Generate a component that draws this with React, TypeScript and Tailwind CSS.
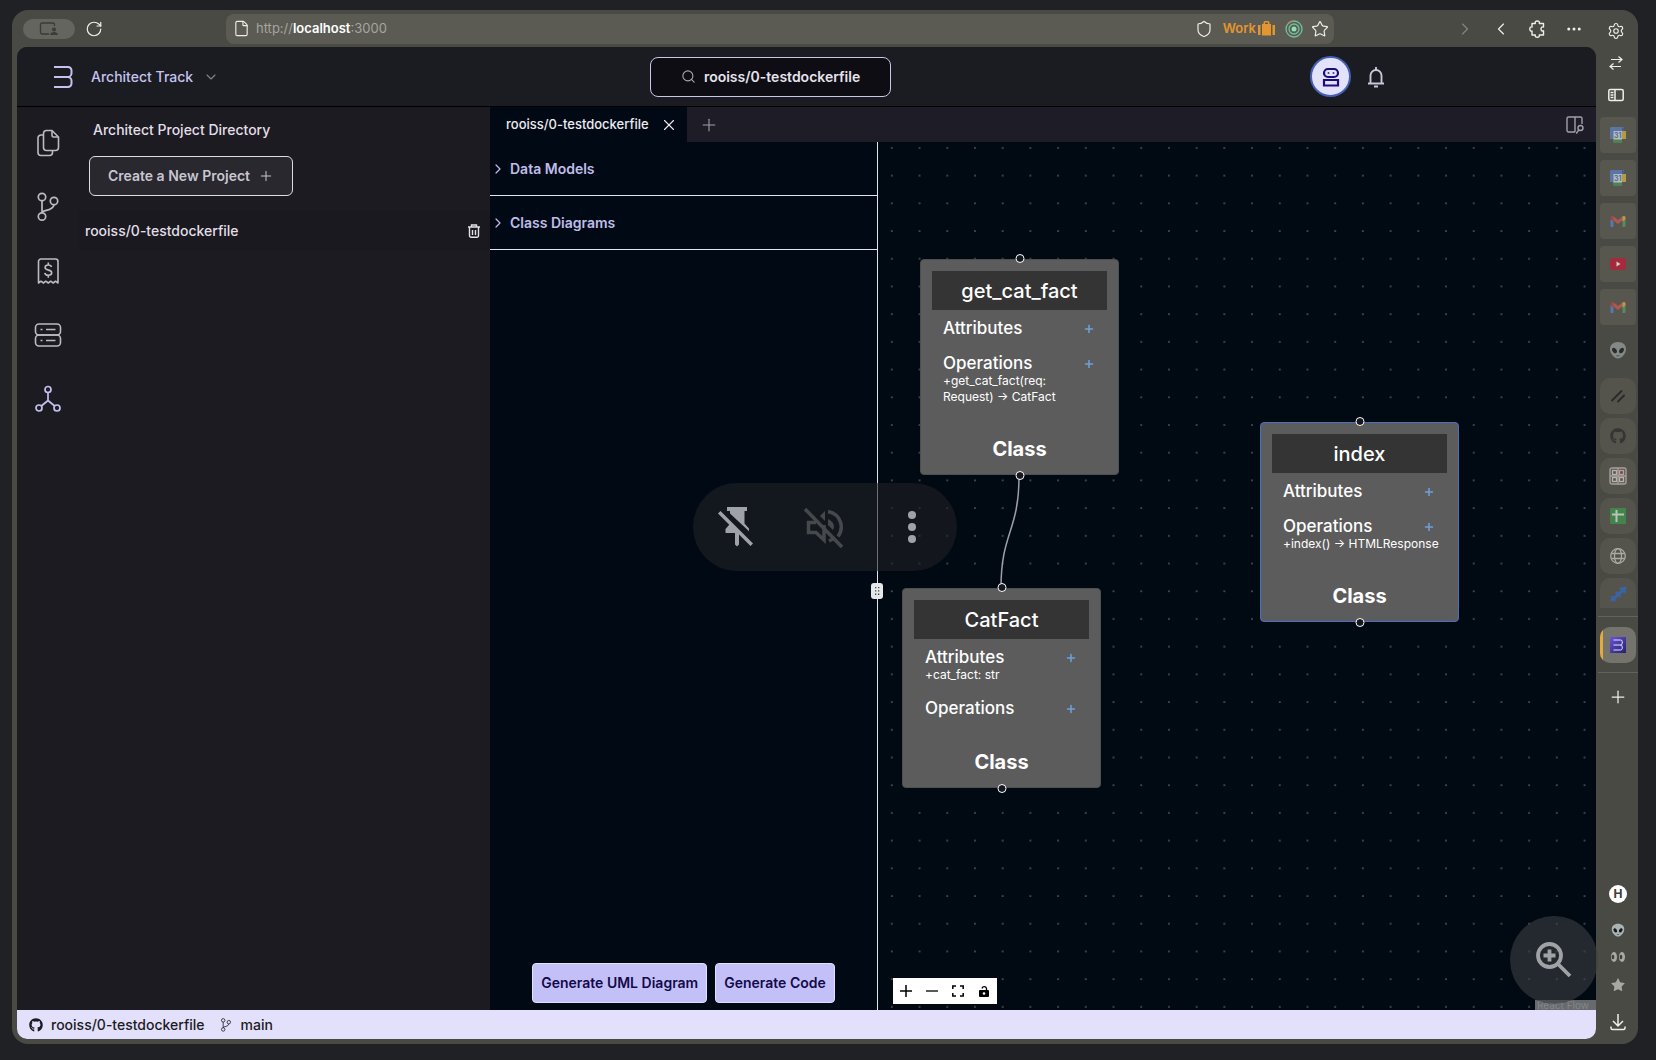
import { useState, type ReactNode } from 'react';
import {
  ChevronDown,
  ChevronLeft,
  ChevronRight,
  Ellipsis,
  File,
  Plus,
  RotateCw,
  Search,
  Settings,
  Shield,
  Star,
  X,
} from 'lucide-react';
import { FaGithub } from 'react-icons/fa';

const PROJECT = 'rooiss/0-testdockerfile';

type ClassNodeType = {
  name: string;
  place: string;
  attributes: string[];
  operations: string[];
  selected?: boolean;
};

const nodes: ClassNodeType[] = [
  {
    name: 'get_cat_fact',
    place: 'left-[42px] top-[117px] h-[216px]',
    attributes: [],
    operations: ['+get_cat_fact(req:\nRequest) → CatFact'],
  },
  {
    name: 'index',
    place: 'left-[382px] top-[280px] h-[200px]',
    attributes: [],
    operations: ['+index() → HTMLResponse'],
    selected: true,
  },
  {
    name: 'CatFact',
    place: 'left-[24px] top-[446px] h-[200px]',
    attributes: ['+cat_fact: str'],
    operations: [],
  },
];

function BranchIcon({ className }: { className: string }) {
  return (
    <svg viewBox="0 0 28 30" className={className} fill="none" stroke="currentColor" strokeWidth="1.7">
      <circle cx="8" cy="5" r="3.7" />
      <circle cx="20" cy="9" r="3.7" />
      <circle cx="8" cy="24.5" r="3.7" />
      <path d="M8 8.7v12M8 20.5c1-3 11-1 12-7.8" />
    </svg>
  );
}

function CopyIcon() {
  return (
    <svg viewBox="-1.5 -0.5 28 30" className="h-[30px] w-7" fill="none" stroke="currentColor" strokeWidth="1.6" strokeLinejoin="round">
      <path d="M16.500 2H11a3 3 0 0 0-3 3v14a3 3 0 0 0 3 3h9a3 3 0 0 0 3-3V8.500z" />
      <path d="M16.500 2.500V7A1.500 1.500 0 0 0 18 8.500h4.500" />
      <path d="M8 6.500H5.500a3 3 0 0 0-3 3V24a3 3 0 0 0 3 3H14a3 3 0 0 0 3-3v-2" />
    </svg>
  );
}

function ReceiptIcon() {
  return (
    <svg viewBox="0 0 28 30" className="h-[30px] w-7" fill="none" stroke="currentColor" strokeWidth="1.6" strokeLinejoin="round">
      <path d="M4.500 27V5.500a2.500 2.500 0 0 1 2.500-2.500h14.500a2.500 2.500 0 0 1 2.500 2.500V27l-2.500-1.800-2.300 1.800-2.500-1.800-2.400 1.800-2.500-1.800-2.400 1.800L7 25.200z" />
      <path d="M17.500 11c-.3-1.500-1.700-2-3.200-2-1.700 0-3.200.8-3.200 2.500 0 3.600 6.600 1.700 6.600 5.200 0 1.700-1.600 2.500-3.400 2.500-1.700 0-3.300-.8-3.500-2.400M14.300 6.500V9M14.300 19.200v2.600" />
    </svg>
  );
}

function ServerIcon() {
  return (
    <svg viewBox="0 0 28 30" className="h-[30px] w-7" fill="none" stroke="currentColor" strokeWidth="1.6">
      <rect x="1.5" y="4" width="25" height="11" rx="3.5" />
      <rect x="1.5" y="15" width="25" height="11" rx="3.5" />
      <path d="M12 9.500h9.500M12 20.500h9.500M6.500 9.500h2M6.500 20.500h2" />
    </svg>
  );
}

function DiagramIcon() {
  return (
    <svg viewBox="0 0 28 30" className="h-[30px] w-7 text-[#c3c0ee]" fill="none" stroke="currentColor" strokeWidth="1.7">
      <circle cx="14" cy="5.5" r="3" />
      <circle cx="5" cy="24" r="3" />
      <circle cx="23" cy="24" r="3" />
      <path d="M14 8.500v8M14 16.500L7.300 22M14 16.500l6.700 5.500" />
    </svg>
  );
}

function BLogo({ className }: { className: string }) {
  return (
    <svg viewBox="0 0 20 24" className={className} fill="none" stroke="currentColor" strokeWidth="2">
      <path d="M1 2h14a3.500 3.500 0 0 1 3.500 3.500v2.700a3.800 3.800 0 0 1-3.800 3.800H1M14.700 12a3.800 3.800 0 0 1 3.800 3.800v2.700A3.500 3.500 0 0 1 15 22H1" />
    </svg>
  );
}

function TrashIcon() {
  return (
    <svg viewBox="0 0 14 16" className="h-4 w-3.5" fill="none" stroke="currentColor" strokeWidth="1.4">
      <path d="M1 4h12M4.500 4V2h5v2M2.500 4.500v8.300a1.500 1.500 0 0 0 1.500 1.500h6a1.500 1.500 0 0 0 1.500-1.500V4.500M5.500 7v5M8.500 7v5" />
    </svg>
  );
}

function PuzzleIcon() {
  return (
    <svg viewBox="0 0 18 18" className="size-[18px]" fill="none" stroke="currentColor" strokeWidth="1.4" strokeLinejoin="round">
      <path d="M3 3.500h3.300C5.800 2 6.600 1 8.300 1s2.500 1 2 2.500h4.200V7c-1.600-.5-2.500.4-2.500 1.900s.9 2.400 2.500 1.900V15h-4.200c.4 1.500-.5 2.200-2 2.200s-2.400-.7-2-2.200H3v-4c-1.400.4-2.200-.6-2.200-2s.8-2.400 2.200-2z" />
    </svg>
  );
}

function AlienIcon({ className }: { className: string }) {
  return (
    <svg viewBox="0 0 18 18" className={className}>
      <path d="M9 1c5 0 8 3 8 7 0 4.500-4.500 9.500-8 9.500S1 12.500 1 8c0-4 3-7 8-7z" fill="#a9b3b4" />
      <ellipse cx="5.5" cy="9.5" rx="2" ry="3" transform="rotate(-35 5.5 9.5)" fill="#15191b" />
      <ellipse cx="12.5" cy="9.5" rx="2" ry="3" transform="rotate(35 12.5 9.5)" fill="#15191b" />
      <path d="M7.500 14.800h3" stroke="#4b5253" />
    </svg>
  );
}

function CalendarIcon() {
  return (
    <svg viewBox="0 0 16 16" className="size-4 opacity-75">
      <path d="M0 1.500A1.500 1.500 0 0 1 1.500 0H12v4H4v8H0z" fill="#5b80c4" />
      <path d="M12 0h1.500v4H16v8h-4V4z" fill="#d6b13a" />
      <path d="M12 0h.5A1.500 1.500 0 0 1 14 1.500V4h-2z" fill="#3d63ae" />
      <path d="M3 12h9v4H4.500A1.500 1.500 0 0 1 3 14.500z" fill="#4d9058" />
      <path d="M3.500 4H12v8.500H3.500z" fill="#d4dce4" />
      <text x="7.8" y="11" fontSize="7" textAnchor="middle" fill="#4a69a5" className="font-['Inter',sans-serif] font-semibold">
        31
      </text>
    </svg>
  );
}

function GmailIcon() {
  return (
    <svg viewBox="0 0 16 16" className="size-4 opacity-70">
      <path d="M.5 6.500h3V14h-2a1 1 0 0 1-1-1z" fill="#5b87d8" />
      <path d="M12.500 6.500h3V13a1 1 0 0 1-1 1h-2z" fill="#58a065" />
      <path d="M3 3l5 4 5-4v4l-5 4-5-4z" fill="#d25a50" />
      <path d="M12.500 3.500c1-1 3-.8 3 1v2l-3 2z" fill="#d8bb4c" />
      <path d="M3.500 3.500c-1-1-3-.8-3 1v2l3 2z" fill="#b6453f" />
    </svg>
  );
}

function YoutubeIcon() {
  return (
    <svg viewBox="0 0 16 16" className="size-4">
      <rect x="0" y="2" width="16" height="12" rx="3" fill="#a52b3c" />
      <path d="M6.500 5.500v5l4-2.500z" fill="#d6cfcf" />
    </svg>
  );
}

function SlashesIcon() {
  return (
    <svg viewBox="0 0 16 16" className="size-4" stroke="#292a2a" strokeWidth="1.9" strokeLinecap="round">
      <path d="M2 12.500l9.500-9.500M8 13.500l6-6" />
    </svg>
  );
}

function GridIcon() {
  return (
    <svg viewBox="0 0 18 18" className="size-[18px]" fill="none" strokeWidth="1.4">
      <rect x="1" y="1" width="16" height="16" rx="2" stroke="#a5a09d" />
      <rect x="3.5" y="3.5" width="4" height="4" stroke="#b7b2b0" />
      <rect x="10.5" y="3.5" width="4" height="4" stroke="#c29a9a" />
      <rect x="3.5" y="10.5" width="4" height="4" stroke="#b7b2b0" />
      <rect x="10.5" y="10.5" width="4" height="4" stroke="#b7b2b0" />
      <path d="M9 1v16M1 9h16" stroke="#a5a09d" />
    </svg>
  );
}

function SheetIcon() {
  return (
    <svg viewBox="0 0 16 16" className="size-4">
      <rect width="16" height="16" rx="1" fill="#43844d" />
      <path d="M2 6.500h12M6.500 2v12" stroke="#b9c4b6" strokeWidth="2" />
    </svg>
  );
}

function GlobeIcon() {
  return (
    <svg viewBox="0 0 18 18" className="size-[18px]" fill="none" stroke="#aaaaa5" strokeWidth="1.3">
      <circle cx="9" cy="9" r="7.3" />
      <ellipse cx="9" cy="9" rx="3.5" ry="7.3" />
      <path d="M2.500 6.500h13M2.500 11.500h13" />
    </svg>
  );
}

function ArrowsIcon() {
  return (
    <svg viewBox="0 0 18 18" className="size-[18px]" fill="#3a64aa">
      <path d="M10 2l7.500-1.500L16.500 8l-2.300-2-2.700 2.500-2-2L12 4z" />
      <path d="M5.500 6l6.500-.5-.5 6.500-2-1.700L7 12.500l-2-2L7.500 8z" />
      <path d="M1 10.500l6-.5-.5 6-2-1.500L3 16l-2-2 1.500-1.500z" />
    </svg>
  );
}

const tabIcons: { label: string; icon: ReactNode }[] = [
  { label: 'Calendar', icon: <CalendarIcon /> },
  { label: 'Second calendar', icon: <CalendarIcon /> },
  { label: 'Mail', icon: <GmailIcon /> },
  { label: 'Video', icon: <YoutubeIcon /> },
  { label: 'Second mail', icon: <GmailIcon /> },
];

const pinnedIcons: { label: string; icon: ReactNode }[] = [
  { label: 'Linear', icon: <SlashesIcon /> },
  { label: 'GitHub', icon: <FaGithub className="size-4 text-[#353634]" /> },
  { label: 'Board', icon: <GridIcon /> },
  { label: 'Sheets', icon: <SheetIcon /> },
  { label: 'Web page', icon: <GlobeIcon /> },
];

function BrowserBar() {
  return (
    <div className="flex h-[37px] items-center text-[#eeeeea]">
      <button aria-label="Profile" className="ml-[11px] flex h-5 w-[52px] items-center justify-center rounded-full bg-[#65655f]">
        <svg viewBox="0 0 20 14" className="h-3.5 w-5" fill="none" stroke="#3b3b37" strokeWidth="1.4">
          <path d="M10 12H3a1.500 1.500 0 0 1-1.500-1.500v-8A1.500 1.500 0 0 1 3 1h11a1.500 1.500 0 0 1 1.500 1.500V4" />
          <circle cx="15" cy="7.5" r="2" fill="#3b3b37" stroke="none" />
          <path d="M11 13c0-4 8-4 8 0z" fill="#3b3b37" stroke="none" />
        </svg>
      </button>
      <button aria-label="Reload" className="ml-2.5">
        <RotateCw className="size-[18px]" strokeWidth={1.6} />
      </button>
      <div className="ml-[123px] flex h-[30px] min-w-0 flex-1 items-center rounded-lg bg-[#5b5b54] pr-[5px] pl-[7px]">
        <File className="size-[17px] shrink-0" strokeWidth={1.6} />
        <p className="ml-1.5 flex-1 text-[13px] text-[#a5a5a0]">
          http://<span className="font-semibold text-white">localhost</span>:3000
        </p>
        <Shield className="size-[18px]" strokeWidth={1.6} />
        <span className="ml-2.5 text-[13px] font-semibold text-[#e3962f]">Work</span>
        <svg viewBox="0 0 17 15" className="ml-0.5 h-[15px] w-[17px]" fill="#e3962f">
          <path d="M0 4h2.500v10H0zM4 3h1.500V1.500A1.500 1.500 0 0 1 7 0h3a1.500 1.500 0 0 1 1.500 1.500V3H13v11.500H4zM7 1.500V3h3V1.500zM14.500 4H17v10h-2.500z" />
        </svg>
        <svg viewBox="0 0 18 18" className="ml-2.5 size-[18px]" fill="none" stroke="#6fc29a" strokeWidth="1.3">
          <circle cx="9" cy="9" r="8" />
          <circle cx="9" cy="9" r="5" />
          <circle cx="9" cy="9" r="2.5" fill="#8fe0b4" stroke="none" />
          <path d="M3.500 3.200a8 8 0 0 1 4-2" stroke="#c08a5a" />
        </svg>
        <button aria-label="Bookmark" className="ml-2">
          <Star className="size-[18px]" strokeWidth={1.6} />
        </button>
      </div>
      <button aria-label="Forward" className="ml-[121px] text-[#85857f]">
        <ChevronRight className="size-5" strokeWidth={1.4} />
      </button>
      <button aria-label="Back" className="ml-4">
        <ChevronLeft className="size-5" strokeWidth={1.4} />
      </button>
      <button aria-label="Extensions" className="ml-[18px]">
        <PuzzleIcon />
      </button>
      <button aria-label="More" className="mr-[13px] ml-[18px]">
        <Ellipsis className="size-[18px]" strokeWidth={2} />
      </button>
    </div>
  );
}

function BrowserSidebar() {
  return (
    <aside className="flex w-[42px] shrink-0 flex-col items-center pt-[5px] pl-0.5 text-[#eeeeea]">
      <div className="flex flex-col items-center pr-1">
        <button aria-label="Settings" className="flex h-8 items-center">
          <Settings className="size-[18px]" strokeWidth={1.5} />
        </button>
        <button aria-label="Swap side" className="flex h-8 items-center">
          <svg viewBox="0 0 14 14" className="size-3.5" fill="none" stroke="currentColor" strokeWidth="1.2">
            <path d="M2 3.500h11M9.500 .5l3.500 3-3.500 3M12 10.500H1M4.500 7.500L1 10.500l3.500 3" />
          </svg>
        </button>
        <button aria-label="Toggle panel" className="flex h-8 items-center">
          <svg viewBox="0 0 16 14" className="h-3.5 w-4" fill="none" stroke="currentColor" strokeWidth="1.5">
            <rect x=".8" y="1.5" width="14.4" height="11" rx="1.5" />
            <path d="M7 1.500v11M2.500 4.500h3M2.500 7h3M2.500 9.500h3" />
          </svg>
        </button>
      </div>
      <div className="mt-1.5 flex flex-col gap-[7px]">
        {tabIcons.map((tab) => (
          <button key={tab.label} aria-label={tab.label} className="flex size-9 items-center justify-center rounded bg-[#57574f]">
            {tab.icon}
          </button>
        ))}
        <button aria-label="Alien" className="flex size-9 items-center justify-center opacity-60">
          <AlienIcon className="size-[18px]" />
        </button>
      </div>
      <div className="mt-2.5 flex flex-col gap-1">
        {pinnedIcons.map((tab) => (
          <button key={tab.label} aria-label={tab.label} className="flex size-9 items-center justify-center rounded-[10px] bg-[#54544d]">
            {tab.icon}
          </button>
        ))}
        <button aria-label="Jobs" className="flex h-[30px] w-9 items-center justify-center rounded-t-[10px] bg-[#54544d] pt-1">
          <ArrowsIcon />
        </button>
      </div>
      <hr className="mt-2 w-full border-[#62625b]" />
      <button aria-label="Architect Track" className="mt-2.5 flex size-9 items-center gap-[7px] overflow-hidden rounded-[10px] bg-[#74746d]">
        <span className="h-full w-[3px] bg-[#e6a93c]" />
        <span className="flex size-4 items-center justify-center bg-linear-to-br from-[#6c55d8] to-[#24206e] text-[#e6e3ff]">
          <BLogo className="h-3 w-2.5" />
        </span>
      </button>
      <hr className="mt-[9px] w-full border-[#62625b]" />
      <button aria-label="New tab" className="mt-3.5">
        <Plus className="size-5" strokeWidth={1.5} />
      </button>
      <div className="mt-auto flex flex-col items-center pb-[13px]">
        <span className="flex size-[18px] items-center justify-center rounded-full bg-white text-xs font-bold text-[#3c3c38]">H</span>
        <AlienIcon className="mt-5 size-3.5" />
        <svg viewBox="0 0 16 16" className="mt-3 size-4">
          <ellipse cx="4" cy="8" rx="3" ry="5" fill="#a9a9a4" />
          <ellipse cx="12" cy="8" rx="3" ry="5" fill="#a9a9a4" />
          <ellipse cx="3" cy="8" rx="1.3" ry="2.2" fill="#3d3d39" />
          <ellipse cx="11" cy="8" rx="1.3" ry="2.2" fill="#3d3d39" />
        </svg>
        <Star className="mt-3 size-4 fill-[#a9a9a4] text-[#a9a9a4]" strokeWidth={0} />
        <svg viewBox="0 0 18 18" className="mt-5 size-[18px]" fill="none" stroke="currentColor" strokeWidth="1.5">
          <path d="M9 1v11.500M4 8l5 5 5-5M2 13.500V15a1.500 1.500 0 0 0 1.500 1.500h11A1.500 1.500 0 0 0 16 15v-1.500" />
        </svg>
      </div>
    </aside>
  );
}

function Header() {
  return (
    <header className="flex h-[60px] shrink-0 items-center justify-between border-b border-black bg-[#1b1b22] pr-[210px] pl-9 text-[#c5c3ee]">
      <div className="flex items-center pr-3">
        <BLogo className="h-6 w-5" />
        <button className="ml-[18px] flex items-center gap-2.5 text-sm font-medium">
          Architect Track
          <ChevronDown className="size-4 text-[#85838f]" strokeWidth={1.6} />
        </button>
      </div>
      <button className="flex h-10 w-[241px] items-center justify-center gap-2 rounded-lg border border-[#c9c6e8] bg-[#0e0d13] text-sm font-semibold text-[#e6e3ee]">
        <Search className="size-[15px] text-[#a8a6ae]" strokeWidth={1.8} />
        {PROJECT}
      </button>
      <div className="flex items-center gap-[15px]">
        <button aria-label="Account" className="flex size-[41px] items-center justify-center rounded-full border-2 border-[#4560b4] bg-[#e2e2fd] text-[#1d0c7d]">
          <svg viewBox="0 0 18 20" className="h-5 w-[18px]" fill="none" stroke="currentColor" strokeWidth="2.2">
            <rect x="2" y="2" width="14" height="8" rx="4" />
            <path d="M2 18.500v-5.500h14v5.500z" />
            <path d="M5.700 6h1.600M10.700 6h1.600" strokeWidth="1.7" />
          </svg>
        </button>
        <button aria-label="Notifications" className="text-[#c8c5dd]">
          <svg viewBox="0 0 20 22" className="h-[22px] w-5" fill="none" stroke="currentColor" strokeWidth="1.9">
            <path d="M2 17.500h16M4.500 17.500V9.500a5.500 5.500 0 0 1 11 0v8M10 1v3" />
            <path d="M8 20.500h4" />
          </svg>
        </button>
      </div>
    </header>
  );
}

function ActivityRail() {
  return (
    <nav className="flex w-[62px] shrink-0 flex-col items-center gap-[34px] pt-[21px] text-[#bdbbc0]">
      <button aria-label="Files"><CopyIcon /></button>
      <button aria-label="Branches"><BranchIcon className="h-[30px] w-7" /></button>
      <button aria-label="Billing"><ReceiptIcon /></button>
      <button aria-label="Servers"><ServerIcon /></button>
      <button aria-label="Diagrams"><DiagramIcon /></button>
    </nav>
  );
}

function ProjectPanel() {
  return (
    <section className="w-[411px] shrink-0 pt-[13px] text-sm font-medium text-[#e2dfe8]">
      <h2 className="pl-3.5">Architect Project Directory</h2>
      <button className="mt-4 ml-2.5 flex h-10 w-[204px] items-center justify-center gap-2 rounded-md border border-[#dedbe4] bg-[#28282e] font-semibold text-[#c8c5d0]">
        Create a New Project
        <Plus className="size-4" strokeWidth={1.5} />
      </button>
      <div className="mt-[15px] flex h-10 items-center justify-between bg-[#1a1920] pr-[9px] pl-1.5">
        <a href="#project">{PROJECT}</a>
        <button aria-label="Delete project">
          <TrashIcon />
        </button>
      </div>
    </section>
  );
}

function TreeSection({ title }: { title: string }) {
  const [open, setOpen] = useState(false);

  return (
    <button
      onClick={() => setOpen(!open)}
      aria-expanded={open}
      className="flex h-[54px] w-full items-center gap-1 border-b border-[#e4e4ee] text-sm font-semibold text-[#bfbde8]"
    >
      <ChevronRight className="size-4" strokeWidth={1.8} />
      {title}
    </button>
  );
}

function NodeSection({ title, items }: { title: string; items: string[] }) {
  return (
    <div>
      <div className="flex h-[19px] items-center justify-between">
        <h3 className="text-[17px] font-medium">{title}</h3>
        <button aria-label={'Add to ' + title} className="mr-1.5 text-[#6ea0dc]">
          <Plus className="size-3" strokeWidth={3} />
        </button>
      </div>
      {items.map((item) => (
        <p key={item} className="text-xs leading-4 whitespace-pre">
          {item}
        </p>
      ))}
    </div>
  );
}

function Handle({ className }: { className: string }) {
  return <span className={'absolute left-1/2 size-[9px] -translate-x-1/2 rounded-full border-[1.5px] border-white bg-[#16181f] ' + className} />;
}

function ClassNode({ node }: { node: ClassNodeType }) {
  const [name, setName] = useState(node.name);

  return (
    <article
      className={
        'absolute flex w-[199px] flex-col rounded border bg-[#5c5c5c] px-[11px] pt-[11px] pb-[11px] text-white ' +
        (node.selected ? 'border-[#4a6fc0] ' : 'border-[#4d5050] ') +
        node.place
      }
    >
      <Handle className="-top-[6px]" />
      <input
        aria-label="Class name"
        value={name}
        onChange={(e) => setName(e.target.value)}
        className="h-[39px] w-full bg-[#343434] text-center text-xl font-medium"
      />
      <div className="mt-[9px] flex flex-col gap-4 pr-1.5 pl-[11px]">
        <NodeSection title="Attributes" items={node.attributes} />
        <NodeSection title="Operations" items={node.operations} />
      </div>
      <p className="mt-auto text-center text-xl font-bold">Class</p>
      <Handle className="-bottom-[6px]" />
    </article>
  );
}

function FlowControls() {
  return (
    <div className="absolute bottom-1.5 left-[15px] flex bg-white text-black">
      <button aria-label="zoom in" className="flex size-[26px] items-center justify-center">
        <svg viewBox="0 0 12 12" className="size-3" stroke="currentColor" strokeWidth="1.5"><path d="M6 0v12M0 6h12" /></svg>
      </button>
      <button aria-label="zoom out" className="flex size-[26px] items-center justify-center">
        <svg viewBox="0 0 12 12" className="size-3" stroke="currentColor" strokeWidth="1.3"><path d="M0 6h12" /></svg>
      </button>
      <button aria-label="fit view" className="flex size-[26px] items-center justify-center">
        <svg viewBox="0 0 12 12" className="size-3" fill="none" stroke="currentColor" strokeWidth="1.5">
          <path d="M.8 4V1H4M8 1h3.200v3M11.200 8v3H8M4 11H.8V8" />
        </svg>
      </button>
      <button aria-label="toggle interactivity" className="flex size-[26px] items-center justify-center">
        <svg viewBox="0 0 10 12" className="h-3 w-2.5">
          <rect y="5" width="10" height="7" rx="1" />
          <path d="M3 3.500a2.300 2.300 0 0 1 4.500 0V5.500" fill="none" stroke="currentColor" strokeWidth="1.3" />
          <circle cx="5" cy="8.5" r="1.3" fill="#fff" />
        </svg>
      </button>
    </div>
  );
}

function Canvas() {
  return (
    <div className="relative min-w-0 flex-1 overflow-hidden bg-[#010912]">
      <svg className="absolute inset-0 size-full">
        <defs>
          <pattern id="dots" width="24" height="24" patternUnits="userSpaceOnUse" patternTransform="translate(0 -8) scale(1.1545)">
            <circle cx="12" cy="12" r=".75" fill="#6c7178" />
          </pattern>
        </defs>
        <rect width="100%" height="100%" fill="url(#dots)" />
        <path d="M141 334C141 390 123 390 123 446" fill="none" stroke="#9d9fa5" strokeWidth="1.5" />
      </svg>
      {nodes.map((node) => (
        <ClassNode key={node.name} node={node} />
      ))}
      <FlowControls />
      <a href="#react-flow" className="absolute right-0 bottom-0 w-[61px] bg-[#686b6e] pl-0.5 text-[10px] leading-[10px] whitespace-nowrap text-[#85878a]">
        React Flow
      </a>
    </div>
  );
}

function Workspace() {
  return (
    <main className="flex min-w-0 flex-1 flex-col">
      <div className="flex h-[35px] shrink-0 items-center bg-[#1e1d27]">
        <div className="flex h-full w-[197px] items-center bg-[#010a14] pl-4 text-[13px] font-medium text-[#ecebf2]">
          <button>{PROJECT}</button>
          <button aria-label="Close tab" className="ml-[11px]">
            <X className="size-[18px]" strokeWidth={1.5} />
          </button>
        </div>
        <button aria-label="New tab" className="ml-3 text-[#a19faa]">
          <Plus className="size-5" strokeWidth={1.3} />
        </button>
        <button aria-label="Inspect layout" className="mr-3 ml-auto text-[#a19faa]">
          <svg viewBox="0 0 18 18" className="size-[18px]" fill="none" stroke="currentColor" strokeWidth="1.4">
            <path d="M9 16H2.500A1.500 1.500 0 0 1 1 14.500v-12A1.500 1.500 0 0 1 2.500 1h12A1.500 1.500 0 0 1 16 2.500V8M9 1v15" />
            <circle cx="14.5" cy="12" r="2.5" />
            <path d="M12.800 14l-2.600 3.500" />
          </svg>
        </button>
      </div>
      <div className="flex flex-1">
        <section className="relative flex w-[388px] shrink-0 flex-col border-r border-[#e4e4ee] bg-[#010a14]">
          <TreeSection title="Data Models" />
          <TreeSection title="Class Diagrams" />
          <div className="mt-auto flex justify-center gap-2 pb-[7px] text-sm font-semibold text-[#130a4b]">
            <button className="h-10 rounded border border-[#e2e0fa] bg-[#c3c0f8] px-2">Generate UML Diagram</button>
            <button className="h-10 rounded border border-[#e2e0fa] bg-[#c3c0f8] px-2">Generate Code</button>
          </div>
          <span className="absolute top-[441px] -right-1.5 z-10 flex h-4 w-3 items-center justify-center rounded-[3px] bg-[#e5e7ea]">
            <svg viewBox="0 0 6 10" className="h-2.5 w-1.5" fill="#44464a">
              <path d="M1 1h1.300v1.300H1zM4 1h1.300v1.300H4zM1 4.300h1.300v1.300H1zM4 4.300h1.300v1.300H4zM1 7.600h1.300v1.300H1zM4 7.600h1.300v1.300H4z" />
            </svg>
          </span>
        </section>
        <Canvas />
      </div>
    </main>
  );
}

function StatusBar() {
  return (
    <footer className="flex h-[29px] shrink-0 items-center bg-[#e2e0fa] pl-3 text-sm font-medium text-[#1b1b22]">
      <FaGithub className="size-3.5" />
      <span className="ml-2">{PROJECT}</span>
      <BranchIcon className="ml-3.5 h-3.5 w-3.5" />
      <span className="ml-2">main</span>
    </footer>
  );
}

function VideoControls() {
  return (
    <div className="absolute top-1/2 left-1/2 z-20 flex h-[88px] w-[264px] -translate-x-1/2 -translate-y-1/2 items-center rounded-full bg-[#202124]/60 pl-[23px] text-[#9fa2a6]">
      <button aria-label="Unpin">
        <svg viewBox="0 0 40 44" className="h-11 w-10" fill="currentColor">
          <path d="M11 2h20v4h-2.500V18.500l4.500 5v2.800L14 8.500V6h-3z" />
          <path d="M13 16.500L24.500 28H23v11.500l-2 2-2-2V28H9.500v-4L13 20z" />
          <path d="M2 8.500L4.500 6 37 38.500 34.500 41z" />
        </svg>
      </button>
      <button aria-label="Muted" className="ml-[46px] text-[#46494c]">
        <svg viewBox="0 0 42 44" className="h-11 w-[42px]">
          <path d="M3 4l37 38" stroke="currentColor" strokeWidth="3.5" />
          <path d="M14 17.500H6.500v10h7.500l8 7.500V20" fill="none" stroke="currentColor" strokeWidth="3.5" />
          <path d="M18 11l5-5v10z" fill="currentColor" />
          <path d="M26 6.500c14 3 16 17 10 25M27 36l6-3" fill="none" stroke="currentColor" strokeWidth="3.5" />
          <path d="M26 14c6 3 7 7 5 11l-5-5z" fill="currentColor" />
        </svg>
      </button>
      <button aria-label="More options" className="ml-16">
        <svg viewBox="0 0 8 34" className="h-[34px] w-2" fill="currentColor">
          <circle cx="4" cy="5" r="4" />
          <circle cx="4" cy="17" r="4" />
          <circle cx="4" cy="29" r="4" />
        </svg>
      </button>
    </div>
  );
}

export default function App() {
  return (
    <div className="flex min-h-screen bg-[#202124] pt-2.5 pr-[18px] pb-4 pl-3 font-['Inter',sans-serif]">
      <div className="relative flex min-w-0 flex-1 rounded-2xl bg-[#4a4a44]">
        <div className="flex min-w-0 flex-1 flex-col pb-[5px]">
          <BrowserBar />
          <div className="ml-[5px] flex flex-1 flex-col overflow-hidden rounded-[10px] bg-[#1c1b22]">
            <Header />
            <div className="flex flex-1">
              <ActivityRail />
              <ProjectPanel />
              <Workspace />
            </div>
            <StatusBar />
          </div>
        </div>
        <BrowserSidebar />
        <VideoControls />
        <button aria-label="Zoom in" className="absolute right-10 bottom-10 z-20 flex size-[88px] items-center justify-center rounded-full bg-[#3c4043]/60 text-[#a0a3a5]">
          <svg viewBox="0 0 36 36" className="size-9" fill="none" stroke="currentColor" strokeWidth="3.8">
            <circle cx="13.5" cy="13.5" r="11.5" />
            <path d="M21.500 21.500L34 34M13.500 7.500v12M7.500 13.500h12" />
          </svg>
        </button>
      </div>
    </div>
  );
}
